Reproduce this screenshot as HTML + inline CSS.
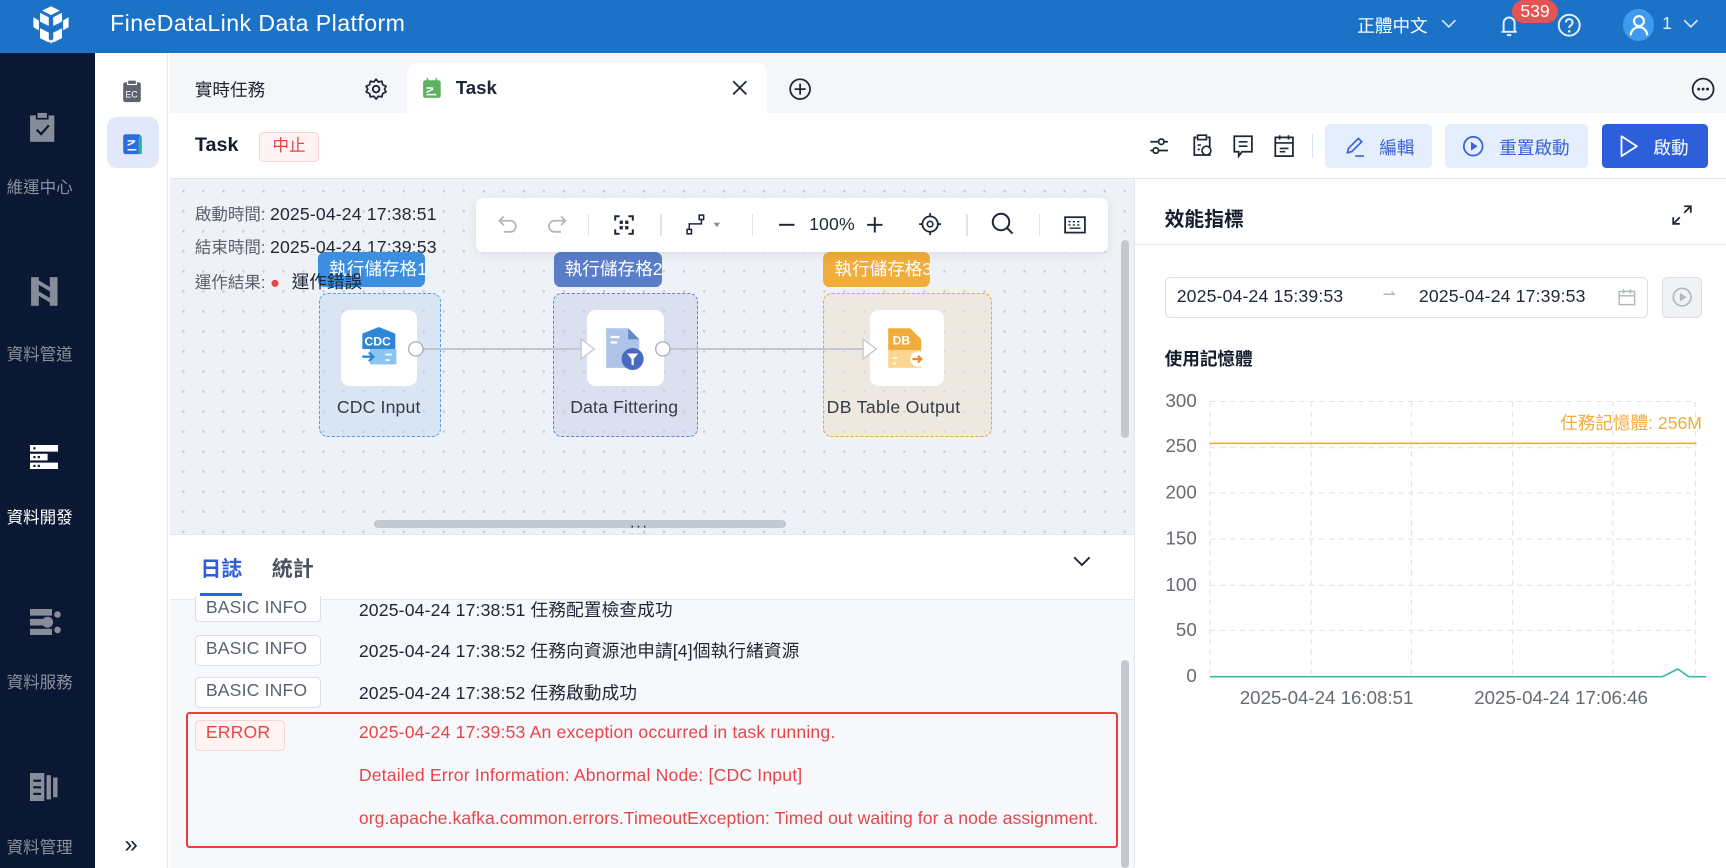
<!DOCTYPE html>
<html><head><meta charset="utf-8"><style>
*{box-sizing:border-box;margin:0;padding:0}
html,body{width:1726px;height:868px;overflow:hidden;background:#fff}
#w{zoom:1.10077;width:1568px;height:789px;position:relative;font-family:"Liberation Sans","Noto Sans CJK TC",sans-serif;color:#1f2636;overflow:hidden}
.a{position:absolute}
.t{position:absolute;white-space:nowrap}
.L{font-size:16px !important;letter-spacing:.15px}
</style></head><body><div id="w">
<div class="a" style="left:0;top:0;width:1568px;height:48px;background:#1b72c6"></div>
<svg class="a" style="left:26px;top:4px" width="40" height="40" viewBox="0 0 40 40"><g fill="#fff"><path d="M20 2l8 4-8 4-8-4z"/><path d="M10 8l8 4v8l-8-4z" opacity=".95"/><path d="M30 8l-8 4v8l8-4z"/><path d="M4 12l5 3v9l-5-3z"/><path d="M36 12l-5 3v9l5-3z"/><path d="M10 22l8 4v9l-8-4z"/><path d="M30 22l-8 4v9l8-4z"/><path d="M14 30l6 3 6-3-6 6z" opacity=".9"/></g></svg>
<div class="t" style="left:100px;top:9px;font-size:21px;letter-spacing:.4px;color:#fff">FineDataLink Data Platform</div>
<div class="t" style="left:1233px;top:12px;font-size:16px;color:#fff">正體中文</div>
<svg class="a" style="left:1308px;top:15px" width="16" height="12"><path d="M2 3l6 6 6-6" stroke="#cfe0f3" stroke-width="1.6" fill="none"/></svg>
<svg class="a" style="left:1360px;top:11px" width="22" height="24"><path d="M4 18h14M6 18V10a5 5 0 0110 0v8M9 21h4" stroke="#e5eefa" stroke-width="1.8" fill="none"/></svg>
<div class="a" style="left:1374px;top:0;width:41px;height:21px;border-radius:11px;background:#e65353;color:#fff;font-size:16px;text-align:center;line-height:21px">539</div>
<svg class="a" style="left:1414px;top:11px" width="24" height="24"><circle cx="12" cy="12" r="9.5" stroke="#e5eefa" stroke-width="1.8" fill="none"/><path d="M9 9.5a3 3 0 115 2.2c-1.3.8-2 1.3-2 2.8" stroke="#e5eefa" stroke-width="1.8" fill="none"/><circle cx="12" cy="17.5" r="1.2" fill="#e5eefa"/></svg>
<div class="a" style="left:1474px;top:8px;width:29px;height:29px;border-radius:50%;background:#3e9bf0"></div>
<svg class="a" style="left:1474px;top:8px" width="29" height="29"><circle cx="14.5" cy="11" r="4.5" stroke="#fff" stroke-width="2" fill="none"/><path d="M7 24a7.5 7.5 0 0115 0" stroke="#fff" stroke-width="2" fill="none"/></svg>
<div class="t" style="left:1510px;top:12px;font-size:16px;color:#e5eefa">1</div>
<svg class="a" style="left:1528px;top:15px" width="16" height="12"><path d="M2 3l6 6 6-6" stroke="#cfe0f3" stroke-width="1.6" fill="none"/></svg>
<div class="a" style="left:0;top:48px;width:86px;height:741px;background:#0b1833"></div>
<svg class="a" style="left:26px;top:101px" width="26" height="30"><rect x="1" y="4" width="22" height="24" fill="#878c99"/><rect x="7" y="1" width="10" height="6" fill="#878c99" stroke="#0b1833" stroke-width="1.5"/><path d="M7 17l4 4 7-8" stroke="#0b1833" stroke-width="2" fill="none"/></svg>
<div class="t" style="left:6px;top:158px;font-size:15px;color:#8a909c">維運中心</div>
<svg class="a" style="left:27px;top:251px" width="26" height="28"><path d="M1 1h7v26H1zM18 1h7v26h-7zM8 4l10 6v4L8 8zM8 14l10 6v4L8 18z" fill="#878c99"/></svg>
<div class="t" style="left:6px;top:310px;font-size:15px;color:#8a909c">資料管道</div>
<svg class="a" style="left:27px;top:404px" width="26" height="22"><rect x="0" y="0" width="26" height="6" fill="#fff"/><rect x="0" y="8" width="16" height="6" fill="#fff"/><rect x="0" y="16" width="26" height="6" fill="#fff"/><g fill="#0b1833"><rect x="3" y="2" width="2" height="2"/><rect x="3" y="10" width="2" height="2"/><rect x="7" y="10" width="2" height="2"/><rect x="3" y="18" width="2" height="2"/><rect x="7" y="18" width="2" height="2"/></g></svg>
<div class="t" style="left:6px;top:458px;font-size:15px;color:#fff">資料開發</div>
<svg class="a" style="left:27px;top:553px" width="28" height="24"><rect x="0" y="0" width="20" height="6" fill="#878c99"/><rect x="0" y="9" width="12" height="6" fill="#878c99"/><rect x="0" y="18" width="20" height="6" fill="#878c99"/><circle cx="16" cy="12" r="5" fill="#878c99"/><circle cx="25" cy="5" r="3" fill="#878c99"/><circle cx="25" cy="19" r="3" fill="#878c99"/></svg>
<div class="t" style="left:6px;top:608px;font-size:15px;color:#8a909c">資料服務</div>
<svg class="a" style="left:27px;top:702px" width="26" height="26"><rect x="0" y="0" width="13" height="26" fill="#878c99"/><rect x="15" y="2" width="4" height="22" fill="#878c99"/><rect x="21" y="4" width="4" height="18" fill="#878c99"/><g fill="#0b1833"><rect x="3" y="6" width="7" height="2"/><rect x="3" y="12" width="7" height="2"/><rect x="3" y="18" width="7" height="2"/></g></svg>
<div class="t" style="left:6px;top:758px;font-size:15px;color:#8a909c">資料管理</div>
<div class="a" style="left:86px;top:48px;width:67px;height:741px;background:#fff;border-right:1px solid #e6e9ef"></div>
<svg class="a" style="left:110px;top:72px" width="20" height="22"><rect x="2" y="3" width="16" height="18" rx="2" fill="#5d6370"/><rect x="6" y="1" width="8" height="4" fill="#5d6370" stroke="#fff"/><text x="4" y="17" font-size="8" fill="#fff" font-family="Liberation Sans">EC</text></svg>
<div class="a" style="left:97px;top:106px;width:47px;height:47px;border-radius:9px;background:#e1e8fa"></div>
<svg class="a" style="left:110px;top:119px" width="20" height="22"><rect x="2" y="3" width="16" height="18" rx="2" fill="#2a6de3"/><rect x="16" y="5" width="3" height="16" fill="#2bb5a0"/><path d="M6 9h7M6 13l6-3M6 17h8" stroke="#fff" stroke-width="1.4"/></svg>
<div class="t" style="left:113px;top:755px;font-size:22px;color:#1f2636">»</div>
<div class="a" style="left:154px;top:48px;width:1414px;height:55px;background:#f5f6fa"></div>
<div class="t" style="left:177px;top:70px;font-size:16px;color:#1f2636">實時任務</div>
<svg class="a" style="left:331px;top:70px" width="22" height="22"><circle cx="11" cy="11" r="3" stroke="#1f2636" stroke-width="1.7" fill="none"/><path d="M11 2l2 2.5 3.2-.6.8 3.1 3 1.4-1.4 2.6 1.4 2.6-3 1.4-.8 3.1-3.2-.6L11 20l-2-2.5-3.2.6-.8-3.1-3-1.4L3.4 11 2 8.4l3-1.4.8-3.1L9 4.5z" stroke="#1f2636" stroke-width="1.6" fill="none" stroke-linejoin="round"/></svg>
<div class="a" style="left:370px;top:57px;width:327px;height:46px;background:#fff;border-radius:8px 8px 0 0"></div>
<svg class="a" style="left:383px;top:70px" width="18" height="20"><rect x="1" y="3" width="16" height="16" rx="2" fill="#5db160"/><path d="M5 1v4M13 1v4" stroke="#5db160" stroke-width="1.5"/><path d="M4 10h6M4 14l6-3M4 16h9" stroke="#fff" stroke-width="1.3"/></svg>
<div class="t" style="left:414px;top:70px;font-size:17px;font-weight:bold;color:#1f2636">Task</div>
<svg class="a" style="left:664px;top:72px" width="16" height="16"><path d="M2 2l12 12M14 2L2 14" stroke="#1f2636" stroke-width="1.6"/></svg>
<svg class="a" style="left:716px;top:70px" width="22" height="22"><circle cx="11" cy="11" r="9" stroke="#1f2636" stroke-width="1.6" fill="none"/><path d="M11 6v10M6 11h10" stroke="#1f2636" stroke-width="1.6"/></svg>
<svg class="a" style="left:1536px;top:70px" width="22" height="22"><circle cx="11" cy="11" r="9.5" stroke="#1f2636" stroke-width="1.6" fill="none"/><circle cx="7" cy="11" r="1.3" fill="#1f2636"/><circle cx="11" cy="11" r="1.3" fill="#1f2636"/><circle cx="15" cy="11" r="1.3" fill="#1f2636"/></svg>
<div class="a" style="left:154px;top:103px;width:1414px;height:60px;background:#fff;border-bottom:1px solid #e3e6ec"></div>
<div class="t" style="left:177px;top:122px;font-size:18px;font-weight:bold;color:#141c2e">Task</div>
<div class="a" style="left:235px;top:120px;width:55px;height:27px;border:1px solid #fbd3d3;background:#fff3f3;border-radius:4px;color:#e6464a;font-size:15px;text-align:center;line-height:25px">中止</div>
<svg class="a" style="left:1042px;top:122px" width="22" height="22"><path d="M3 7h16M3 15h16" stroke="#1f2636" stroke-width="1.6"/><circle cx="13" cy="7" r="2.5" fill="#fff" stroke="#1f2636" stroke-width="1.6"/><circle cx="8" cy="15" r="2.5" fill="#fff" stroke="#1f2636" stroke-width="1.6"/></svg>
<svg class="a" style="left:1082px;top:121px" width="22" height="24"><path d="M15 4h2v16H3V4h2" stroke="#1f2636" stroke-width="1.6" fill="none"/><rect x="6" y="2" width="8" height="4" stroke="#1f2636" stroke-width="1.5" fill="#fff"/><circle cx="14" cy="16" r="4" fill="#fff" stroke="#1f2636" stroke-width="1.5"/><path d="M6 11h3M6 15h2" stroke="#1f2636" stroke-width="1.5"/></svg>
<svg class="a" style="left:1118px;top:121px" width="22" height="24"><path d="M3 3h16v14h-9l-3 4v-4H3z" stroke="#1f2636" stroke-width="1.6" fill="none"/><path d="M7 8h8M7 12h8" stroke="#1f2636" stroke-width="1.5"/></svg>
<svg class="a" style="left:1156px;top:121px" width="22" height="24"><rect x="3" y="4" width="16" height="17" stroke="#1f2636" stroke-width="1.6" fill="none"/><path d="M7 2v4M15 2v4M3 9h16M7 14h8M7 17h5" stroke="#1f2636" stroke-width="1.5"/></svg>
<div class="a" style="left:1192px;top:122px;width:1px;height:22px;background:#dde0e6"></div>
<div class="a" style="left:1204px;top:113px;width:97px;height:40px;border-radius:4px;background:#e4eefd"></div>
<svg class="a" style="left:1220px;top:122px" width="22" height="22"><path d="M4 17l1-4 9-9 3 3-9 9zM11 20h8" stroke="#3a62d9" stroke-width="1.5" fill="none"/></svg>
<div class="t" style="left:1253px;top:123px;font-size:16px;color:#3a62d9">編輯</div>
<div class="a" style="left:1313px;top:113px;width:130px;height:40px;border-radius:4px;background:#e4eefd"></div>
<svg class="a" style="left:1326px;top:121px" width="24" height="24"><circle cx="12" cy="12" r="8.5" stroke="#3a62d9" stroke-width="1.6" fill="none"/><path d="M10 8v8l6-4z" fill="#3a62d9"/></svg>
<div class="t" style="left:1362px;top:123px;font-size:16px;color:#3a62d9">重置啟動</div>
<div class="a" style="left:1455px;top:113px;width:97px;height:40px;border-radius:4px;background:#2d5fdb"></div>
<svg class="a" style="left:1468px;top:121px" width="22" height="24"><path d="M5 3l14 9-14 9z" stroke="#fff" stroke-width="1.6" fill="none" stroke-linejoin="round"/></svg>
<div class="t" style="left:1502px;top:123px;font-size:16px;color:#fff">啟動</div>
<div class="a" style="left:154px;top:163px;width:876px;height:322px;background-color:#eef1f6;background-image:radial-gradient(circle,#c9ced8 1px,transparent 1.4px);background-size:18.2px 18.2px;background-position:3px 2px"></div>
<div class="t" style="left:177px;top:183px;font-size:15px;color:#5b6170">啟動時間: <span class="L" style="color:#1f2636">2025-04-24 17:38:51</span></div>
<div class="t" style="left:177px;top:213px;font-size:15px;color:#5b6170">結束時間: <span class="L" style="color:#1f2636">2025-04-24 17:39:53</span></div>
<div class="t" style="left:177px;top:244px;font-size:15px;color:#5b6170">運作結果: <span style="color:#e6464a">●</span></div>
<div class="a" style="left:289px;top:229px;width:97px;height:32px;border-radius:6px;background:#3b8ee0"></div>
<div class="t" style="left:299px;top:233px;font-size:16px;color:#fff">執行儲存格1</div>
<div class="t" style="left:265px;top:244px;font-size:16px;color:#1f2636">運作錯誤</div>
<div class="a" style="left:290px;top:266px;width:111px;height:131px;border:1.5px dashed #4f9de4;border-radius:8px;background:rgba(190,215,240,.45)"></div>
<div class="a" style="left:503px;top:229px;width:98px;height:32px;border-radius:6px;background:#5a7dc9"></div>
<div class="t" style="left:513px;top:233px;font-size:16px;color:#fff">執行儲存格2</div>
<div class="a" style="left:502px;top:266px;width:132px;height:131px;border:1.5px dashed #6283cd;border-radius:8px;background:rgba(195,205,232,.45)"></div>
<div class="a" style="left:748px;top:229px;width:97px;height:32px;border-radius:6px;background:#f0ad3c"></div>
<div class="t" style="left:758px;top:233px;font-size:16px;color:#fff">執行儲存格3</div>
<div class="a" style="left:748px;top:266px;width:153px;height:131px;border:1.5px dashed #e4a440;border-radius:8px;background:rgba(238,225,205,.55)"></div>
<div class="a" style="left:380px;top:316px;width:152px;height:2px;background:#c2c7d1"></div>
<div class="a" style="left:604px;top:316px;width:186px;height:2px;background:#c2c7d1"></div>
<div class="a" style="left:310px;top:282px;width:69px;height:69px;border-radius:8px;background:#fff"></div>
<div class="a" style="left:533px;top:282px;width:70px;height:69px;border-radius:8px;background:#fff"></div>
<div class="a" style="left:790px;top:282px;width:68px;height:69px;border-radius:8px;background:#fff"></div>
<svg class="a" style="left:326px;top:297px" width="38" height="40"><path d="M3 6l15-6 15 6v14H3z" fill="#2f86d8"/><text x="5" y="17" font-size="11" font-weight="bold" fill="#fff" font-family="Liberation Sans">CDC</text><rect x="10" y="20" width="24" height="14" fill="#8ec4f0"/><path d="M3 27h9M9 23l4 4-4 4" stroke="#2f86d8" stroke-width="2.2" fill="none"/><path d="M24 25h6M24 30h4" stroke="#fff" stroke-width="1.5"/></svg>
<svg class="a" style="left:549px;top:296px" width="38" height="42"><path d="M2 2h20l10 10v26H2z" fill="#aec3e8"/><path d="M22 2v10h10z" fill="#6585c9"/><path d="M6 10h8M6 15h6" stroke="#fff" stroke-width="2"/><circle cx="26" cy="30" r="10" fill="#4a6cc0"/><path d="M21 25h10l-4 5v6l-2-1v-5z" fill="#fff"/></svg>
<svg class="a" style="left:805px;top:296px" width="38" height="42"><path d="M2 2h20l10 10v10H2z" fill="#f0ad3c"/><text x="6" y="17" font-size="11" font-weight="bold" fill="#fff" font-family="Liberation Sans">DB</text><rect x="2" y="22" width="30" height="16" fill="#fbd690"/><circle cx="29" cy="30" r="7" fill="#fff"/><path d="M24 30h8M29 27l3 3-3 3" stroke="#ee8a1e" stroke-width="2" fill="none"/><path d="M6 29h4M6 34h3" stroke="#fff" stroke-width="1.5"/></svg>
<svg class="a" style="left:370px;top:308px" width="16" height="18"><circle cx="8" cy="9" r="6.5" fill="#fff" stroke="#a9afbb" stroke-width="1.2"/></svg>
<svg class="a" style="left:527px;top:307px" width="16" height="20"><path d="M1 1l12 9-12 9z" fill="#fff" stroke="#c2c7d1" stroke-width="1.2"/></svg>
<svg class="a" style="left:594px;top:308px" width="16" height="18"><circle cx="8" cy="9" r="6.5" fill="#fff" stroke="#a9afbb" stroke-width="1.2"/></svg>
<svg class="a" style="left:783px;top:307px" width="16" height="20"><path d="M1 1l12 9-12 9z" fill="#fff" stroke="#c2c7d1" stroke-width="1.2"/></svg>
<div class="t L" style="left:306px;top:361px;color:#333a48">CDC Input</div>
<div class="t L" style="left:518px;top:361px;color:#333a48">Data Fittering</div>
<div class="t L" style="left:751px;top:361px;color:#333a48;letter-spacing:.3px">DB Table Output</div>
<div class="a" style="left:432px;top:180px;width:575px;height:49px;background:#fff;border-radius:6px;box-shadow:0 2px 10px rgba(0,0,0,.08)"></div>
<svg class="a" style="left:450px;top:193px" width="70" height="22"><path d="M5 8h9a5 5 0 010 10H8M8 4L4 8l4 4" stroke="#b1b6c0" stroke-width="1.6" fill="none"/><path d="M63 8h-9a5 5 0 000 10h6M60 4l4 4-4 4" stroke="#b1b6c0" stroke-width="1.6" fill="none"/></svg>
<div class="a" style="left:534px;top:194px;width:1px;height:20px;background:#e0e3e8"></div>
<svg class="a" style="left:557px;top:194px" width="20" height="20"><path d="M2 6V2h4M14 2h4v4M18 14v4h-4M6 18H2v-4" stroke="#1f2636" stroke-width="1.8" fill="none"/><rect x="6" y="6" width="3" height="3" fill="#1f2636"/><rect x="11" y="6" width="3" height="3" fill="#1f2636"/><rect x="6" y="11" width="3" height="3" fill="#1f2636"/><rect x="11" y="11" width="3" height="3" fill="#1f2636"/></svg>
<div class="a" style="left:600px;top:194px;width:1px;height:20px;background:#e0e3e8"></div>
<svg class="a" style="left:623px;top:194px" width="34" height="22"><rect x="1" y="14" width="4" height="4" stroke="#1f2636" stroke-width="1.4" fill="none"/><rect x="12" y="1" width="4" height="4" stroke="#1f2636" stroke-width="1.4" fill="none"/><path d="M3 14v-5h11V5" stroke="#1f2636" stroke-width="1.4" fill="none"/><path d="M25 8h6l-3 4z" fill="#8a909c"/></svg>
<div class="a" style="left:683px;top:194px;width:1px;height:20px;background:#e0e3e8"></div>
<svg class="a" style="left:707px;top:196px" width="16" height="16"><path d="M1 8h14" stroke="#1f2636" stroke-width="1.8"/></svg>
<div class="t L" style="left:735px;top:194px;color:#1f2636">100%</div>
<svg class="a" style="left:787px;top:196px" width="16" height="16"><path d="M1 8h14M8 1v14" stroke="#1f2636" stroke-width="1.8"/></svg>
<svg class="a" style="left:834px;top:193px" width="22" height="22"><circle cx="11" cy="11" r="7" stroke="#1f2636" stroke-width="1.6" fill="none"/><circle cx="11" cy="11" r="2.5" stroke="#1f2636" stroke-width="1.5" fill="none"/><path d="M11 1v3M11 18v3M1 11h3M18 11h3" stroke="#1f2636" stroke-width="1.6"/></svg>
<div class="a" style="left:878px;top:194px;width:1px;height:20px;background:#e0e3e8"></div>
<svg class="a" style="left:899px;top:192px" width="24" height="24"><circle cx="10" cy="10" r="7.5" stroke="#1f2636" stroke-width="1.8" fill="none"/><path d="M15.5 15.5l5 5" stroke="#1f2636" stroke-width="1.8"/></svg>
<div class="a" style="left:944px;top:194px;width:1px;height:20px;background:#e0e3e8"></div>
<svg class="a" style="left:967px;top:195px" width="20" height="18"><rect x="1" y="2" width="18" height="14" stroke="#1f2636" stroke-width="1.6" fill="none"/><path d="M4 6h2M8 6h2M12 6h2M4 9h2M8 9h2M12 9h2M5 12h10" stroke="#1f2636" stroke-width="1.3"/></svg>
<div class="a" style="left:1018px;top:218px;width:8px;height:180px;border-radius:4px;background:#c4c8d0"></div>
<div class="a" style="left:340px;top:472px;width:374px;height:8px;border-radius:4px;background:#c4c8d0"></div>
<div class="t" style="left:572px;top:475px;font-size:14px;color:#1f2636;letter-spacing:1px;line-height:7px">···<br>···</div>
<div class="a" style="left:154px;top:485px;width:876px;height:60px;background:#fff;border-top:1px solid #e3e6ec;border-bottom:1px solid #e6e9ef"></div>
<div class="t" style="left:182px;top:502px;font-size:19px;font-weight:bold;color:#2d5fdb">日誌</div>
<div class="a" style="left:182px;top:539px;width:38px;height:3px;background:#2d5fdb"></div>
<div class="t" style="left:247px;top:502px;font-size:19px;font-weight:bold;color:#4a5162">統計</div>
<svg class="a" style="left:974px;top:503px" width="18" height="14"><path d="M2 3l7 7 7-7" stroke="#1f2636" stroke-width="1.7" fill="none"/></svg>
<div class="a" style="left:154px;top:545px;width:876px;height:244px;background:#f7f8fb"></div>
<div class="a" style="left:177px;top:541px;width:115px;height:24px;border:1px solid #dcdfe5;border-top:none;border-radius:0 0 4px 4px;background:#fff"></div>
<div class="t L" style="left:187px;top:542px;color:#5b6170">BASIC INFO</div>
<div class="t L" style="left:326px;top:542px;color:#1f2636">2025-04-24 17:38:51 任務配置檢查成功</div>
<div class="a" style="left:177px;top:577px;width:115px;height:28px;border:1px solid #dcdfe5;border-radius:4px;background:#fff"></div>
<div class="t L" style="left:187px;top:580px;color:#5b6170">BASIC INFO</div>
<div class="t L" style="left:326px;top:580px;color:#1f2636">2025-04-24 17:38:52 任務向資源池申請[4]個執行緒資源</div>
<div class="a" style="left:177px;top:615px;width:115px;height:28px;border:1px solid #dcdfe5;border-radius:4px;background:#fff"></div>
<div class="t L" style="left:187px;top:618px;color:#5b6170">BASIC INFO</div>
<div class="t L" style="left:326px;top:618px;color:#1f2636">2025-04-24 17:38:52 任務啟動成功</div>
<div class="a" style="left:169px;top:647px;width:847px;height:123px;border:2.5px solid #ef3b3b;border-radius:3px"></div>
<div class="a" style="left:177px;top:654px;width:82px;height:28px;border:1px solid #fbd3d3;border-radius:4px;background:#fff3f3"></div>
<div class="t L" style="left:187px;top:656px;color:#e6464a">ERROR</div>
<div class="t L" style="left:326px;top:656px;color:#e6464a">2025-04-24 17:39:53 An exception occurred in task running.</div>
<div class="t L" style="left:326px;top:695px;color:#e6464a">Detailed Error Information: Abnormal Node: [CDC Input]</div>
<div class="t L" style="left:326px;top:734px;color:#e6464a;letter-spacing:.05px">org.apache.kafka.common.errors.TimeoutException: Timed out waiting for a node assignment.</div>
<div class="a" style="left:1018px;top:600px;width:8px;height:189px;border-radius:4px;background:#c4c8d0"></div>
<div class="a" style="left:1030px;top:163px;width:538px;height:626px;background:#fff;border-left:1px solid #e3e6ec"></div>
<div class="t" style="left:1058px;top:184px;font-size:18px;font-weight:bold;color:#141c2e">效能指標</div>
<svg class="a" style="left:1518px;top:185px" width="20" height="20"><path d="M12 2h6v6M18 2l-6 6M8 18H2v-6M2 18l6-6" stroke="#1f2636" stroke-width="1.6" fill="none"/></svg>
<div class="a" style="left:1031px;top:222px;width:537px;height:1px;background:#e6e9ef"></div>
<div class="a" style="left:1058px;top:252px;width:439px;height:37px;border:1px solid #dcdfe5;border-radius:5px"></div>
<div class="t L" style="left:1069px;top:260px;color:#1f2636">2025-04-24 15:39:53</div>
<div class="t" style="left:1256px;top:259px;font-size:14px;color:#b1b6c0">⇀</div>
<div class="t L" style="left:1289px;top:260px;color:#1f2636">2025-04-24 17:39:53</div>
<svg class="a" style="left:1469px;top:261px" width="18" height="18"><rect x="2" y="4" width="14" height="12" stroke="#b1b6c0" stroke-width="1.3" fill="none"/><path d="M2 8h14M6 2v4M12 2v4" stroke="#b1b6c0" stroke-width="1.3"/></svg>
<div class="a" style="left:1510px;top:252px;width:36px;height:37px;border:1px solid #dcdfe5;border-radius:5px;background:#f1f2f5"></div>
<svg class="a" style="left:1517px;top:259px" width="22" height="22"><circle cx="11" cy="11" r="8" stroke="#b1b6c0" stroke-width="1.5" fill="none"/><path d="M9 7v8l6-4z" fill="#b1b6c0"/></svg>
<div class="t" style="left:1058px;top:314px;font-size:16px;font-weight:bold;color:#141c2e">使用記憶體</div>
<svg class="a" style="left:1040px;top:350px" width="528" height="300">
<g font-family="Liberation Sans" font-size="17" fill="#666a73" text-anchor="end">
<text x="47" y="20">300</text><text x="47" y="61">250</text><text x="47" y="103">200</text><text x="47" y="145">150</text><text x="47" y="187">100</text><text x="47" y="228">50</text><text x="47" y="270">0</text></g>
<g stroke="#e1e4ea" stroke-dasharray="5 4" stroke-width="1">
<path d="M59 15h441M59 57h441M59 98h441M59 140h441M59 182h441M59 223h441"/>
<path d="M59 15v250M151 15v250M242 15v250M334 15v250M425 15v250M500 15v250"/></g>
<path d="M59 53h442" stroke="#f0ad3c" stroke-width="1.5"/>
<text x="506" y="40" font-family="Liberation Sans,Noto Sans CJK TC,sans-serif" font-size="16" fill="#f0ad3c" text-anchor="end">任務記憶體: 256M</text>
<path d="M59 265h411l14-7 10 7h16" stroke="#3cb9a0" stroke-width="1.5" fill="none"/>
<g font-family="Liberation Sans" font-size="17" fill="#666a73" text-anchor="middle"><text x="165" y="290">2025-04-24 16:08:51</text><text x="378" y="290">2025-04-24 17:06:46</text></g>
</svg>
</div></body></html>
